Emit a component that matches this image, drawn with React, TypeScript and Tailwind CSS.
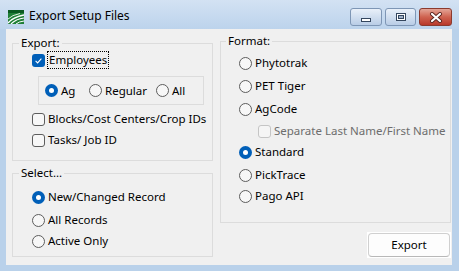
import React from "react";

function CheckBox({ checked, disabled }: { checked?: boolean; disabled?: boolean }) {
	if (checked) {
		return (
			<span className="w-[13px] h-[13px] shrink-0 rounded-[3px] bg-[#005fb8] flex items-center justify-center">
				<svg width="13" height="13" viewBox="0 0 13 13">
					<path d="M3.6 6.9 L5.6 8.9 L9.4 4.6" fill="none" stroke="#fff" strokeWidth="1.1" />
				</svg>
			</span>
		);
	}
	return (
		<span
			className={
				disabled
					? "w-[13px] h-[13px] shrink-0 rounded-[3px] border border-[#c5c5c5] bg-[#f5f5f5]"
					: "w-[13px] h-[13px] shrink-0 rounded-[3px] border border-[#5d5d5d] bg-[#f7f7f7]"
			}
		/>
	);
}

function Radio({ checked }: { checked?: boolean }) {
	if (checked) {
		return (
			<span className="w-[13px] h-[13px] shrink-0 rounded-full bg-[#005fb8] flex items-center justify-center">
				<span className="w-[5px] h-[5px] rounded-full bg-white" />
			</span>
		);
	}
	return <span className="w-[13px] h-[13px] shrink-0 rounded-full border border-[#5d5d5d] bg-[#f7f7f7]" />;
}

function RadioRow({ label, checked, className }: { label: string; checked?: boolean; className?: string }) {
	return (
		<div className={"h-[18px] flex items-center gap-[3px] whitespace-nowrap " + (className ?? "")}>
			<Radio checked={checked} />
			<span>{label}</span>
		</div>
	);
}

function AppIcon() {
	return (
		<svg width="16" height="14" viewBox="0 0 16 14">
			<rect x="0" y="0" width="16" height="14" fill="#1f7f36" />
			<rect x="0" y="0" width="16" height="3" fill="#0b5a20" />
			<path d="M0 13 Q5 7 16 5" fill="none" stroke="#fff" strokeWidth="1.3" />
			<path d="M3 14 Q8 9 16 8" fill="none" stroke="#fff" strokeWidth="1.2" />
			<path d="M0 9 Q4 5 12 3.5" fill="none" stroke="#dff0df" strokeWidth="1" />
			<path d="M8 14 Q11 11.5 16 11" fill="none" stroke="#fff" strokeWidth="1" />
		</svg>
	);
}

function CaptionButtons() {
	return (
		<div className="flex gap-[3px] items-start">
			<div className="w-[32px] h-[18px] rounded-[3px] border border-[#7e96b5] bg-gradient-to-b from-[#e9f0f9] to-[#b9cde6] flex items-end justify-center pb-[3px]">
				<span className="w-[10px] h-[4px] border border-[#34465e] bg-white" />
			</div>
			<div className="w-[31px] h-[18px] rounded-[3px] border border-[#7e96b5] bg-gradient-to-b from-[#e9f0f9] to-[#b9cde6] flex items-center justify-center">
				<span className="w-[10px] h-[8px] border border-[#34465e] bg-white flex items-center justify-center">
					<span className="w-[6px] h-[4px] bg-[#9fb1c8] border border-[#34465e]" />
				</span>
			</div>
			<div className="w-[33px] h-[18px] rounded-[3px] border border-[#8b3a2e] bg-gradient-to-b from-[#e3a497] via-[#cf6250] to-[#b8382a] flex items-center justify-center">
				<svg width="14" height="11" viewBox="0 0 14 11">
					<path d="M3 2 L11 9 M11 2 L3 9" stroke="#5a2520" strokeWidth="4" strokeLinecap="round" />
					<path d="M3 2 L11 9 M11 2 L3 9" stroke="#fff" strokeWidth="2.2" strokeLinecap="round" />
				</svg>
			</div>
		</div>
	);
}

export default function App() {
	return (
		<div className="w-[459px] h-[271px] flex flex-col bg-[#b9d1ea] font-['Noto_Sans',sans-serif] text-[11.5px] leading-[16px] text-black">
			{/* title bar */}
			<div className="h-[29px] flex items-start bg-gradient-to-b from-[#d3e2f3] to-[#bcd3ec] pl-[8px] pr-[7px]">
				<div className="mt-[10px]">
					<AppIcon />
				</div>
				<span className="ml-[5px] mt-[8px] text-[12px]">Export Setup Files</span>
				<div className="ml-auto mt-[8px]">
					<CaptionButtons />
				</div>
			</div>

			{/* client area */}
			<div className="ml-[6px] w-[446px] flex-1 mb-[6px] bg-[#f0f0f0] flex pl-[6px] gap-[7px]">
				{/* left column */}
				<div className="w-[201px] flex flex-col mt-[6px]">
					<fieldset className="border border-[#dcdcdc]">
						<legend className="ml-[6px] px-[2px] leading-[16px]">Export:</legend>
						<div className="pl-[19px] pb-[11px] whitespace-nowrap">
							<div className="h-[18px] flex items-center gap-[2px]">
								<CheckBox checked />
								<span className="border border-dotted border-black px-[1px] leading-[16px]">Employees</span>
							</div>
							<div className="mt-[7px] ml-[6px] w-[166px] h-[29px] border border-[#dcdcdc] flex items-center pl-[6px]">
								<RadioRow label="Ag" checked className="w-[44px]" />
								<RadioRow label="Regular" className="w-[67px]" />
								<RadioRow label="All" />
							</div>
							<div className="mt-[5px] h-[18px] flex items-center gap-[3px]">
								<CheckBox />
								<span>Blocks/Cost Centers/Crop IDs</span>
							</div>
							<div className="mt-[3px] h-[18px] flex items-center gap-[3px]">
								<CheckBox />
								<span>Tasks/ Job ID</span>
							</div>
						</div>
					</fieldset>

					<fieldset className="mt-[4px] border border-[#dcdcdc]">
						<legend className="ml-[6px] px-[2px] leading-[16px]">Select...</legend>
						<div className="pl-[19px] pb-[6px]">
							<RadioRow label="New/Changed Record" checked className="mt-[7px]" />
							<RadioRow label="All Records" className="mt-[5px]" />
							<RadioRow label="Active Only" className="mt-[3px]" />
						</div>
					</fieldset>
				</div>

				{/* right column */}
				<div className="w-[231px] flex flex-col mt-[4px]">
					<fieldset className="border border-[#dcdcdc]">
						<legend className="ml-[5px] px-[2px] leading-[16px]">Format:</legend>
						<div className="pl-[18px] pb-[17px]">
							<RadioRow label="Phytotrak" className="mt-[5px]" />
							<RadioRow label="PET Tiger" className="mt-[5px]" />
							<RadioRow label="AgCode" className="mt-[5px]" />
							<div className="mt-[4px] ml-[19px] h-[18px] flex items-center gap-[3px] text-[#6d6d6d] whitespace-nowrap">
								<CheckBox disabled />
								<span>Separate Last Name/First Name</span>
							</div>
							<RadioRow label="Standard" checked className="mt-[3px]" />
							<RadioRow label="PickTrace" className="mt-[5px]" />
							<RadioRow label="Pago API" className="mt-[3px]" />
						</div>
					</fieldset>
					<div className="mt-[9px] self-end bg-white p-[1px]">
						<button className="w-[82px] h-[24px] rounded-[4px] border border-[#d0d0d0] border-b-[#b8b8b8] bg-[#fdfdfd] flex items-center justify-center leading-[16px]">
							Export
						</button>
					</div>
				</div>
			</div>
		</div>
	);
}
